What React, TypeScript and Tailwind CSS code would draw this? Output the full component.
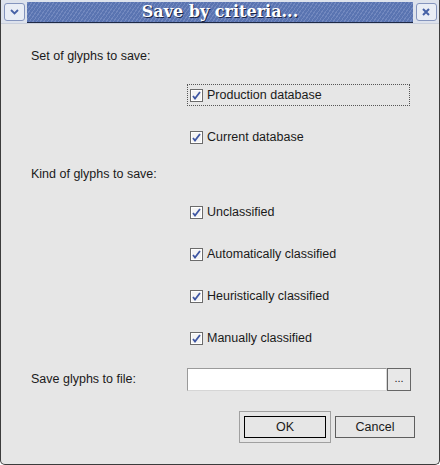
import React from 'react';

const sans = { fontFamily: '"Liberation Sans", Arial, sans-serif' };

function CheckIcon() {
  return (
    <svg width="13" height="13" viewBox="0 0 13 13" className="shrink-0">
      <rect x="0.5" y="0.5" width="12" height="12" fill="#f4f4f4" stroke="#6b6b6b" />
      <rect x="1.5" y="1.5" width="10" height="10" fill="none" stroke="#ffffff" />
      <path d="M3 7 L5 9.5 L10 3" fill="none" stroke="#3f57a3" strokeWidth="1.8" />
    </svg>
  );
}

function Check({ label, focused = false }: { label: string; focused?: boolean }) {
  return (
    <div
      className={
        'flex items-center gap-[4px] h-[22px] pl-[3px] w-[223px] ' +
        (focused ? 'outline outline-1 outline-dotted outline-[#555] -outline-offset-1' : '')
      }
    >
      <CheckIcon />
      <span className="text-[12.5px] text-[#1a1a1a] leading-none">{label}</span>
    </div>
  );
}

export default function App() {
  return (
    <div
      className="w-[440px] h-[465px] bg-[#e6e6e6] flex flex-col border-x border-b border-[#3c3c3c] rounded-b-[5px] overflow-hidden"
      style={sans}
    >
      {/* title bar */}
      <div className="h-[24px] flex bg-[#dde2ec] border-b border-[#c9cfdc]">
        <div className="w-[26px] flex items-center justify-center">
          <div className="w-[21px] h-[18px] rounded-[3px] border border-[#8494bd] bg-[#e9edf5] flex items-center justify-center">
            <svg width="9" height="6" viewBox="0 0 9 6">
              <path d="M1 1 L4.5 4.5 L8 1" fill="none" stroke="#4661a6" strokeWidth="1.8" />
            </svg>
          </div>
        </div>
        <div className="flex-1 mt-[2px] flex items-center justify-center border-b border-[#1f2a44] bg-[#5871ad] bg-[repeating-linear-gradient(-55deg,#5a74b1_0px,#5a74b1_2px,#7288bf_2px,#7288bf_3px)]">
          <span
            className="text-white font-bold text-[16px] leading-none [text-shadow:1px_1px_0_#1b2748]"
            style={{ fontFamily: '"DejaVu Serif", serif' }}
          >
            Save by criteria...
          </span>
        </div>
        <div className="w-[26px] flex items-center justify-center">
          <div className="w-[21px] h-[18px] rounded-[3px] border border-[#8494bd] bg-[#e9edf5] flex items-center justify-center">
            <svg width="8" height="8" viewBox="0 0 8 8">
              <path d="M1 1 L7 7 M7 1 L1 7" stroke="#4661a6" strokeWidth="2" />
            </svg>
          </div>
        </div>
      </div>

      {/* body */}
      <div className="flex flex-col text-[12.5px] text-[#1a1a1a]">
        <div className="mt-[22px] h-[20px] pl-[30px] flex items-center">Set of glyphs to save:</div>
        <div className="mt-[18px] pl-[186px]">
          <Check label="Production database" focused />
        </div>
        <div className="mt-[20px] pl-[186px]">
          <Check label="Current database" />
        </div>
        <div className="mt-[16px] h-[20px] pl-[30px] flex items-center">Kind of glyphs to save:</div>
        <div className="mt-[17px] pl-[186px]">
          <Check label="Unclassified" />
        </div>
        <div className="mt-[20px] pl-[186px]">
          <Check label="Automatically classified" />
        </div>
        <div className="mt-[20px] pl-[186px]">
          <Check label="Heuristically classified" />
        </div>
        <div className="mt-[20px] pl-[186px]">
          <Check label="Manually classified" />
        </div>

        <div className="mt-[19px] h-[23px] flex items-center pl-[30px]">
          <span className="w-[156px]">Save glyphs to file:</span>
          <div className="w-[200px] h-[23px] bg-white border border-[#9a9a9a] border-b-[#d6d6d6] border-r-[#d6d6d6]" />
          <div className="w-[24px] h-[23px] border border-[#666] bg-[#e8e8e8] flex items-center justify-center text-[11px] leading-none pb-[2px]">
            ...
          </div>
        </div>

        <div className="mt-[20px] h-[32px] flex items-center justify-end pr-[24px] gap-[4px]">
          <div className="w-[92px] h-[32px] border border-[#a0a0a0] flex items-center justify-center">
            <div className="w-[82px] h-[22px] border border-black bg-[#e6e6e6] flex items-center justify-center">
              OK
            </div>
          </div>
          <div className="w-[80px] h-[22px] border border-[#5e5e5e] bg-[#e6e6e6] flex items-center justify-center">
            Cancel
          </div>
        </div>
      </div>
    </div>
  );
}
